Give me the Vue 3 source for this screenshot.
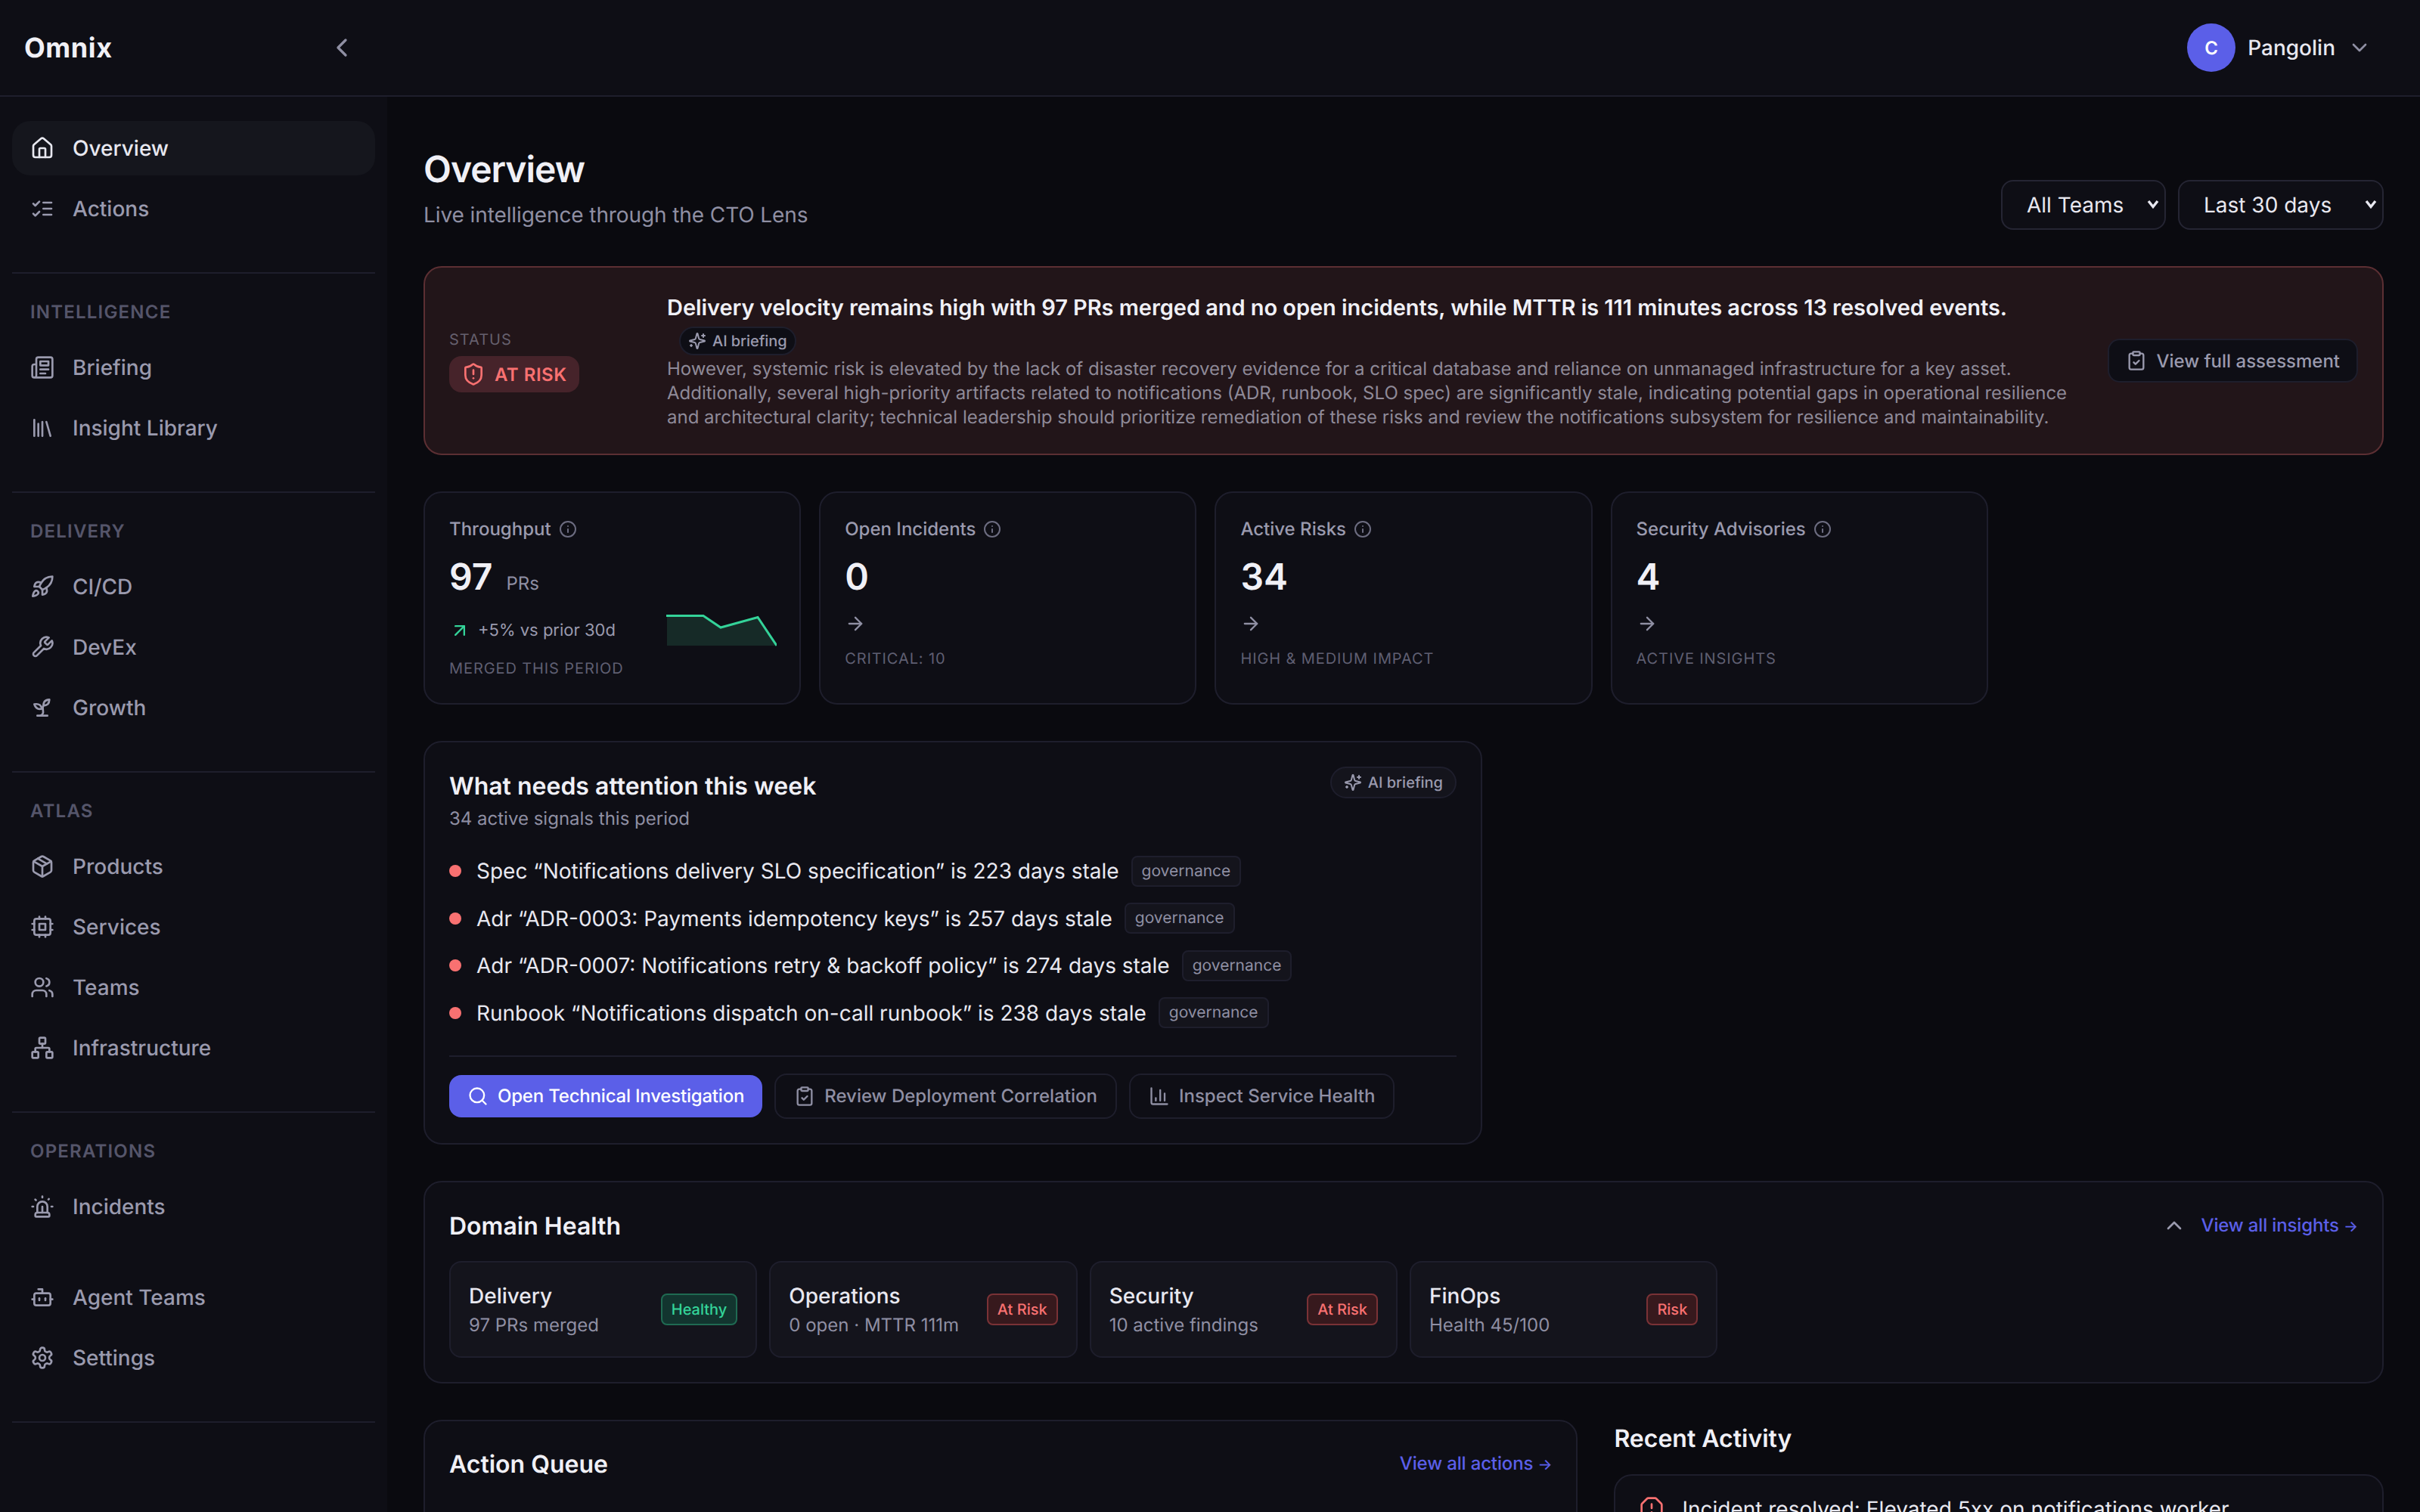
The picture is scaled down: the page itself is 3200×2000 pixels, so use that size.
<script setup>
import { h } from 'vue'

const paths = {
  home: '<path d="M15 21v-8a1 1 0 0 0-1-1h-4a1 1 0 0 0-1 1v8"/><path d="M3 10a2 2 0 0 1 .709-1.528l7-5.999a2 2 0 0 1 2.582 0l7 5.999A2 2 0 0 1 21 10v9a2 2 0 0 1-2 2H5a2 2 0 0 1-2-2z"/>',
  checks: '<path d="m3 17 2 2 4-4"/><path d="m3 7 2 2 4-4"/><path d="M13 6h8"/><path d="M13 12h8"/><path d="M13 18h8"/>',
  news: '<path d="M4 22h16a2 2 0 0 0 2-2V4a2 2 0 0 0-2-2H8a2 2 0 0 0-2 2v16a2 2 0 0 1-2 2Zm0 0a2 2 0 0 1-2-2v-9c0-1.1.9-2 2-2h2"/><path d="M18 14h-8"/><path d="M15 18h-5"/><path d="M10 6h8v4h-8V6Z"/>',
  library: '<path d="m16 6 4 14"/><path d="M12 6v14"/><path d="M8 8v12"/><path d="M4 4v16"/>',
  rocket: '<path d="M4.5 16.5c-1.5 1.26-2 5-2 5s3.74-.5 5-2c.71-.84.7-2.13-.09-2.91a2.18 2.18 0 0 0-2.91-.09z"/><path d="m12 15-3-3a22 22 0 0 1 2-3.95A12.88 12.88 0 0 1 22 2c0 2.72-.78 7.5-6 11a22.35 22.35 0 0 1-4 2z"/><path d="M9 12H4s.55-3.03 2-4c1.62-1.08 5 0 5 0"/><path d="M12 15v5s3.03-.55 4-2c1.08-1.62 0-5 0-5"/>',
  wrench: '<path d="M14.7 6.3a1 1 0 0 0 0 1.4l1.6 1.6a1 1 0 0 0 1.4 0l3.77-3.77a6 6 0 0 1-7.94 7.94l-6.91 6.91a2.12 2.12 0 0 1-3-3l6.91-6.91a6 6 0 0 1 7.94-7.94l-3.76 3.76z"/>',
  sprout: '<path d="M7 20h10"/><path d="M10 20c5.5-2.5.8-6.4 3-10"/><path d="M9.5 9.4c1.1.8 1.8 2.2 2.3 3.7-2 .4-3.5.4-4.8-.3-1.2-.6-2.3-1.9-3-4.2 2.8-.5 4.4 0 5.5.8z"/><path d="M14.1 6a7 7 0 0 0-1.1 4c1.9-.1 3.3-.6 4.3-1.4 1-1 1.6-2.3 1.7-4.6-2.7.1-4 1-4.9 2z"/>',
  package: '<path d="m7.5 4.27 9 5.15"/><path d="M21 8a2 2 0 0 0-1-1.73l-7-4a2 2 0 0 0-2 0l-7 4A2 2 0 0 0 3 8v8a2 2 0 0 0 1 1.73l7 4a2 2 0 0 0 2 0l7-4A2 2 0 0 0 21 16Z"/><path d="m3.3 7 8.7 5 8.7-5"/><path d="M12 22V12"/>',
  cpu: '<rect x="4" y="4" width="16" height="16" rx="2"/><rect x="9" y="9" width="6" height="6"/><path d="M15 2v2"/><path d="M15 20v2"/><path d="M2 15h2"/><path d="M2 9h2"/><path d="M20 15h2"/><path d="M20 9h2"/><path d="M9 2v2"/><path d="M9 20v2"/>',
  users: '<path d="M16 21v-2a4 4 0 0 0-4-4H6a4 4 0 0 0-4 4v2"/><circle cx="9" cy="7" r="4"/><path d="M22 21v-2a4 4 0 0 0-3-3.87"/><path d="M16 3.13a4 4 0 0 1 0 7.75"/>',
  network: '<rect x="16" y="16" width="6" height="6" rx="1"/><rect x="2" y="16" width="6" height="6" rx="1"/><rect x="9" y="2" width="6" height="6" rx="1"/><path d="M5 16v-3a1 1 0 0 1 1-1h12a1 1 0 0 1 1 1v3"/><path d="M12 12V8"/>',
  siren: '<path d="M7 18v-6a5 5 0 1 1 10 0v6"/><path d="M5 21a1 1 0 0 0 1 1h12a1 1 0 0 0 1-1v-1a2 2 0 0 0-2-2H7a2 2 0 0 0-2 2z"/><path d="M21 12h1"/><path d="M18.5 4.5 18 5"/><path d="M2 12h1"/><path d="M12 2v1"/><path d="m4.929 4.929.707.707"/><path d="M12 12v6"/>',
  bot: '<path d="M12 8V4H8"/><rect width="16" height="12" x="4" y="8" rx="2"/><path d="M2 14h2"/><path d="M20 14h2"/><path d="M15 13v2"/><path d="M9 13v2"/>',
  settings: '<path d="M12.22 2h-.44a2 2 0 0 0-2 2v.18a2 2 0 0 1-1 1.73l-.43.25a2 2 0 0 1-2 0l-.15-.08a2 2 0 0 0-2.73.73l-.22.38a2 2 0 0 0 .73 2.73l.15.1a2 2 0 0 1 1 1.72v.51a2 2 0 0 1-1 1.74l-.15.09a2 2 0 0 0-.73 2.73l.22.38a2 2 0 0 0 2.73.73l.15-.08a2 2 0 0 1 2 0l.43.25a2 2 0 0 1 1 1.73V20a2 2 0 0 0 2 2h.44a2 2 0 0 0 2-2v-.18a2 2 0 0 1 1-1.73l.43-.25a2 2 0 0 1 2 0l.15.08a2 2 0 0 0 2.73-.73l.22-.39a2 2 0 0 0-.73-2.73l-.15-.08a2 2 0 0 1-1-1.74v-.5a2 2 0 0 1 1-1.74l.15-.09a2 2 0 0 0 .73-2.73l-.22-.38a2 2 0 0 0-2.73-.73l-.15.08a2 2 0 0 1-2 0l-.43-.25a2 2 0 0 1-1-1.73V4a2 2 0 0 0-2-2z"/><circle cx="12" cy="12" r="3"/>',
  left: '<path d="m15 18-6-6 6-6"/>',
  down: '<path d="m6 9 6 6 6-6"/>',
  up: '<path d="m18 15-6-6-6 6"/>',
  info: '<circle cx="12" cy="12" r="10"/><path d="M12 16v-4"/><path d="M12 8h.01"/>',
  right: '<path d="M5 12h14"/><path d="m12 5 7 7-7 7"/>',
  upright: '<path d="M7 7h10v10"/><path d="M7 17 17 7"/>',
  sparkles: '<path d="M9.937 15.5A2 2 0 0 0 8.5 14.063l-6.135-1.582a.5.5 0 0 1 0-.962L8.5 9.936A2 2 0 0 0 9.937 8.5l1.582-6.135a.5.5 0 0 1 .963 0L14.063 8.5A2 2 0 0 0 15.5 9.937l6.135 1.581a.5.5 0 0 1 0 .964L15.5 14.063a2 2 0 0 0-1.437 1.437l-1.582 6.135a.5.5 0 0 1-.963 0z"/><path d="M20 3v4"/><path d="M22 5h-4"/><path d="M4 17v2"/><path d="M5 18H3"/>',
  shield: '<path d="M20 13c0 5-3.5 7.5-7.66 8.95a1 1 0 0 1-.67-.01C7.5 20.5 4 18 4 13V6a1 1 0 0 1 1-1c2 0 4.5-1.2 6.24-2.72a1.17 1.17 0 0 1 1.52 0C14.51 3.81 17 5 19 5a1 1 0 0 1 1 1z"/><path d="M12 8v4"/><path d="M12 16h.01"/>',
  clipboard: '<rect width="8" height="4" x="8" y="2" rx="1" ry="1"/><path d="M16 4h2a2 2 0 0 1 2 2v14a2 2 0 0 1-2 2H6a2 2 0 0 1-2-2V6a2 2 0 0 1 2-2h2"/><path d="m9 14 2 2 4-4"/>',
  search: '<circle cx="11" cy="11" r="8"/><path d="m21 21-4.3-4.3"/>',
  chart: '<path d="M3 3v16a2 2 0 0 0 2 2h16"/><path d="M18 17V9"/><path d="M13 17V5"/><path d="M8 17v-3"/>',
  octagon: '<path d="M12 16h.01"/><path d="M12 8v4"/><path d="M15.312 2a2 2 0 0 1 1.414.586l4.688 4.688A2 2 0 0 1 22 8.688v6.624a2 2 0 0 1-.586 1.414l-4.688 4.688a2 2 0 0 1-1.414.586H8.688a2 2 0 0 1-1.414-.586l-4.688-4.688A2 2 0 0 1 2 15.312V8.688a2 2 0 0 1 .586-1.414l4.688-4.688A2 2 0 0 1 8.688 2z"/>'
}

const Icon = (props) =>
  h('svg', {
    viewBox: '0 0 24 24',
    width: props.size,
    height: props.size,
    fill: 'none',
    stroke: 'currentColor',
    'stroke-width': 2,
    'stroke-linecap': 'round',
    'stroke-linejoin': 'round',
    style: { flex: 'none', display: 'block' },
    innerHTML: paths[props.name]
  })
Icon.props = ['name', 'size']

const navGroups = [
  { items: [{ icon: 'home', label: 'Overview', active: true }, { icon: 'checks', label: 'Actions' }], line: true },
  { title: 'INTELLIGENCE', items: [{ icon: 'news', label: 'Briefing' }, { icon: 'library', label: 'Insight Library' }], line: true },
  { title: 'DELIVERY', items: [{ icon: 'rocket', label: 'CI/CD' }, { icon: 'wrench', label: 'DevEx' }, { icon: 'sprout', label: 'Growth' }], line: true },
  { title: 'ATLAS', items: [{ icon: 'package', label: 'Products' }, { icon: 'cpu', label: 'Services' }, { icon: 'users', label: 'Teams' }, { icon: 'network', label: 'Infrastructure' }], line: true },
  { title: 'OPERATIONS', items: [{ icon: 'siren', label: 'Incidents' }], line: false },
  { items: [{ icon: 'bot', label: 'Agent Teams' }, { icon: 'settings', label: 'Settings' }], line: true }
]

const kpis = [
  { title: 'Open Incidents', value: '0', foot: 'CRITICAL: 10' },
  { title: 'Active Risks', value: '34', foot: 'HIGH & MEDIUM IMPACT' },
  { title: 'Security Advisories', value: '4', foot: 'ACTIVE INSIGHTS' }
]

const signals = [
  'Spec “Notifications delivery SLO specification” is 223 days stale',
  'Adr “ADR-0003: Payments idempotency keys” is 257 days stale',
  'Adr “ADR-0007: Notifications retry & backoff policy” is 274 days stale',
  'Runbook “Notifications dispatch on-call runbook” is 238 days stale'
]

const domains = [
  { name: 'Delivery', sub: '97 PRs merged', badge: 'Healthy', tone: 'good' },
  { name: 'Operations', sub: '0 open · MTTR 111m', badge: 'At Risk', tone: 'bad' },
  { name: 'Security', sub: '10 active findings', badge: 'At Risk', tone: 'bad' },
  { name: 'FinOps', sub: 'Health 45/100', badge: 'Risk', tone: 'bad' }
]
</script>

<template>
  <div class="app">
    <aside class="sidebar">
      <div class="brand">
        <span class="logo">Omnix</span>
        <Icon name="left" :size="40" class="collapse" />
      </div>
      <nav class="nav">
        <section v-for="(g, i) in navGroups" :key="i" class="group" :class="{ line: g.line }">
          <div v-if="g.title" class="group-title">{{ g.title }}</div>
          <div class="items">
            <a v-for="it in g.items" :key="it.label" class="item" :class="{ active: it.active }">
              <Icon :name="it.icon" :size="32" />
              <span>{{ it.label }}</span>
            </a>
          </div>
        </section>
      </nav>
    </aside>

    <div class="body">
      <header class="topbar">
        <div class="user">
          <span class="avatar">C</span>
          <span class="user-name">Pangolin</span>
          <Icon name="down" :size="32" class="user-chev" />
        </div>
      </header>

      <main class="main">
        <div class="page-head">
          <div>
            <h1>Overview</h1>
            <p class="lead">Live intelligence through the CTO Lens</p>
          </div>
          <div class="filters">
            <label class="select-wrap teams">
              <select><option>All Teams</option></select>
              <svg class="select-arrow" viewBox="0 0 16 12" width="16" height="12"><path d="M2 2 8 9.5 14 2" fill="none" stroke="currentColor" stroke-width="3.4" /></svg>
            </label>
            <label class="select-wrap period">
              <select><option>Last 30 days</option></select>
              <svg class="select-arrow" viewBox="0 0 16 12" width="16" height="12"><path d="M2 2 8 9.5 14 2" fill="none" stroke="currentColor" stroke-width="3.4" /></svg>
            </label>
          </div>
        </div>

        <section class="status">
          <div class="status-side">
            <div class="status-label">STATUS</div>
            <div class="risk-pill"><Icon name="shield" :size="32" /><span>AT RISK</span></div>
          </div>
          <div class="status-text">
            <h2>Delivery velocity remains high with 97 PRs merged and no open incidents, while MTTR is 111 minutes across 13 resolved events. <span class="ai dark"><Icon name="sparkles" :size="24" />AI briefing</span></h2>
            <p>However, systemic risk is elevated by the lack of disaster recovery evidence for a critical database and reliance on unmanaged infrastructure for a key asset. Additionally, several high-priority artifacts related to notifications (ADR, runbook, SLO spec) are significantly stale, indicating potential gaps in operational resilience and architectural clarity; technical leadership should prioritize remediation of these risks and review the notifications subsystem for resilience and maintainability.</p>
          </div>
          <button class="assess"><Icon name="clipboard" :size="28" />View full assessment</button>
        </section>

        <section class="kpis">
          <article class="card kpi">
            <div class="kpi-title">Throughput <Icon name="info" :size="24" /></div>
            <div class="kpi-value">97 <small>PRs</small></div>
            <div class="trend">
              <span class="trend-text"><Icon name="upright" :size="28" class="green" />+5% vs prior 30d</span>
              <svg class="spark" viewBox="0 0 146 42" width="146" height="42">
                <path d="M1 1.5H49L72 17 121 3.5 146 41H1Z" fill="#162a27" />
                <path d="M0 1.5H49L72 17 121 3.5 146 41" fill="none" stroke="#34d399" stroke-width="3" />
              </svg>
            </div>
            <div class="kpi-foot tight">MERGED THIS PERIOD</div>
          </article>
          <article v-for="k in kpis" :key="k.title" class="card kpi">
            <div class="kpi-title">{{ k.title }} <Icon name="info" :size="24" /></div>
            <div class="kpi-value">{{ k.value }}</div>
            <Icon name="right" :size="28" class="kpi-arrow" />
            <div class="kpi-foot">{{ k.foot }}</div>
          </article>
        </section>

        <section class="card attention">
          <div class="attention-head">
            <div>
              <h3>What needs attention this week</h3>
              <p class="muted">34 active signals this period</p>
            </div>
            <span class="ai soft"><Icon name="sparkles" :size="24" />AI briefing</span>
          </div>
          <ul class="signals">
            <li v-for="s in signals" :key="s">
              <i class="dot"></i><span>{{ s }}</span><em class="tag">governance</em>
            </li>
          </ul>
          <div class="actions">
            <button class="btn primary"><Icon name="search" :size="28" />Open Technical Investigation</button>
            <button class="btn"><Icon name="clipboard" :size="28" />Review Deployment Correlation</button>
            <button class="btn"><Icon name="chart" :size="28" />Inspect Service Health</button>
          </div>
        </section>

        <section class="card domain">
          <div class="domain-head">
            <h3>Domain Health</h3>
            <div class="domain-links">
              <Icon name="up" :size="32" class="up" />
              <a class="link">View all insights <span class="arrow">→</span></a>
            </div>
          </div>
          <div class="domain-grid">
            <div v-for="d in domains" :key="d.name" class="domain-item">
              <div class="domain-text">
                <div class="domain-name">{{ d.name }}</div>
                <div class="domain-sub">{{ d.sub }}</div>
              </div>
              <span class="badge" :class="d.tone">{{ d.badge }}</span>
            </div>
          </div>
        </section>

        <section class="bottom">
          <div class="card queue">
            <h3>Action Queue</h3>
            <a class="link">View all actions <span class="arrow">→</span></a>
          </div>
          <div>
            <h3 class="recent-title">Recent Activity</h3>
            <div class="card recent">
              <Icon name="octagon" :size="32" class="red" />
              <span>Incident resolved: Elevated 5xx on notifications worker</span>
            </div>
          </div>
        </section>
      </main>
    </div>
  </div>
</template>

<style>
html, body { margin: 0; background: #0a0a0f; overflow: hidden; }
</style>

<style scoped>
* { box-sizing: border-box; }
.app {
  display: flex;
  width: 3200px;
  height: 2000px;
  overflow: hidden;
  background: #0a0a0f;
  color: #e8e8f0;
  font-family: Inter, "Noto Sans", sans-serif;
  text-rendering: geometricPrecision;
}
h1, h2, h3, p, ul { margin: 0; padding: 0; }
button { font-family: inherit; cursor: pointer; text-rendering: geometricPrecision; white-space: nowrap; }

.sidebar { width: 512px; flex: none; background: #0e0e15; }
.brand {
  height: 128px;
  border-bottom: 2px solid #1e1e2c;
  display: flex;
  align-items: center;
  justify-content: space-between;
  padding: 0 40px 0 32px;
}
.logo { font-size: 36px; font-weight: 700; letter-spacing: 0.6px; color: #f0f0f6; }
.collapse { color: #8f8fa3; }
.nav { padding: 32px 16px 0; }
.group { padding-bottom: 48px; }
.group.line { border-bottom: 2px solid #1e1e2c; }
.group-title {
  font-size: 24px;
  line-height: 36px;
  font-weight: 600;
  letter-spacing: 1.2px;
  color: #55556a;
  padding: 33px 24px 19px;
}
.items { display: flex; flex-direction: column; gap: 8px; }
.item {
  display: flex;
  align-items: center;
  gap: 24px;
  height: 72px;
  padding: 0 24px;
  border-radius: 24px;
  font-size: 28px;
  font-weight: 500;
  color: #9a9aae;
}
.item.active { background: #15161d; color: #e8e8f0; }

.body { flex: 1; min-width: 0; display: flex; flex-direction: column; }
.topbar {
  height: 128px;
  flex: none;
  background: #0e0e15;
  border-bottom: 2px solid #1e1e2c;
  display: flex;
  justify-content: flex-end;
  align-items: center;
  padding-right: 64px;
}
.user { display: flex; align-items: center; }
.avatar {
  width: 64px;
  height: 64px;
  border-radius: 50%;
  background: #5b5fe8;
  color: #fff;
  display: flex;
  align-items: center;
  justify-content: center;
  font-size: 24px;
  font-weight: 600;
}
.user-name { margin-left: 16px; font-size: 28px; font-weight: 500; color: #e8e8f0; }
.user-chev { margin-left: 16px; color: #8f8fa3; }

.main { padding: 64px 48px 0; display: flex; flex-direction: column; gap: 48px; }
.page-head { display: flex; justify-content: space-between; align-items: flex-end; }
h1 { margin-top: 2px; font-size: 48px; line-height: 60px; font-weight: 600; letter-spacing: -1px; color: #f0f0f6; }
.lead { margin-top: 10px; font-size: 28px; line-height: 40px; letter-spacing: -0.1px; color: #8f8fa3; }
.filters { display: flex; gap: 16px; }
.select-wrap { position: relative; display: block; height: 66px; }
.select-wrap.teams { width: 218px; }
.select-wrap.period { width: 272px; }
.select-wrap select {
  appearance: none;
  width: 100%;
  height: 100%;
  padding: 0 32px;
  background: #0e0e15;
  border: 2px solid #252533;
  border-radius: 16px;
  color: #e8e8f0;
  font: 400 28px Inter, sans-serif;
  text-rendering: geometricPrecision;
  outline: none;
}
.select-arrow { position: absolute; right: 9px; top: 26px; color: #e8e8f0; pointer-events: none; }

.status {
  display: flex;
  align-items: center;
  gap: 48px;
  padding: 32px;
  background: #221519;
  border: 2px solid #5c2f33;
  border-radius: 24px;
}
.status-side { width: 240px; flex: none; }
.status-label { font-size: 20px; line-height: 28px; letter-spacing: 1px; color: #66606e; }
.risk-pill {
  display: inline-flex;
  align-items: center;
  gap: 12px;
  height: 48px;
  margin-top: 8px;
  padding: 0 16px;
  border-radius: 16px;
  background: #46232a;
  color: #f87171;
  font-size: 24px;
  font-weight: 600;
  letter-spacing: 0.5px;
}
.status-text { flex: 1; min-width: 0; }
.status-text h2 { font-size: 29px; line-height: 42px; font-weight: 600; letter-spacing: -0.05px; color: #f0f0f6; }
.status-text p { margin-top: 2px; font-size: 24px; line-height: 32px; color: #8f8a98; }
.ai {
  display: inline-flex;
  align-items: center;
  gap: 8px;
  border-radius: 999px;
  font-size: 20px;
  font-weight: 500;
  color: #9a9aae;
  vertical-align: middle;
  line-height: 1;
}
.ai.dark { height: 38px; margin-left: 16px; padding: 0 10px; background: #0e0e15; border: 2px solid #1e1e2c; }
.ai.soft { height: 42px; padding: 0 16px; background: #14141c; border: 2px solid #1e1e2c; flex: none; }
.assess {
  display: flex;
  align-items: center;
  gap: 12px;
  height: 58px;
  padding: 0 22px;
  flex: none;
  background: #0e0e15;
  border: 2px solid #1e1e2c;
  border-radius: 16px;
  color: #9a9aae;
  font-size: 24px;
  font-weight: 500;
}

.card { background: #0e0e15; border: 2px solid #1e1e2c; border-radius: 24px; }
.kpis { display: grid; grid-template-columns: repeat(5, 1fr); gap: 24px; }
.kpi { height: 282px; padding: 30px 32px; }
.kpi-title { display: flex; align-items: center; gap: 10px; font-size: 24px; line-height: 36px; font-weight: 500; color: #9a9aae; }
.kpi-title svg { color: #6c6c80; }
.kpi-value { margin-top: 13px; font-size: 48px; line-height: 64px; font-weight: 600; color: #f0f0f6; }
.kpi-value small { margin-left: 6px; font-size: 24px; font-weight: 400; color: #8f8fa3; }
.trend { display: flex; justify-content: space-between; align-items: center; height: 42px; margin-top: 9px; }
.trend-text { display: flex; align-items: center; gap: 10px; font-size: 22px; color: #9a9aae; }
.green { color: #34d399; }
.spark { display: block; margin-right: -2px; }
.kpi-arrow { margin-top: 16px; color: #8f8fa3; }
.kpi-foot { margin-top: 17px; font-size: 20px; line-height: 30px; letter-spacing: 0.9px; color: #5f5f72; }
.kpi-foot.tight { margin-top: 14px; }

.attention { width: 1400px; height: 534px; padding: 32px; }
.attention-head { display: flex; justify-content: space-between; align-items: flex-start; }
h3 { font-size: 32px; line-height: 44px; font-weight: 600; color: #f0f0f6; }
.attention-head h3 { margin-top: 4px; }
.muted { margin-top: 5px; font-size: 24px; line-height: 32px; color: #8f8fa3; }
.signals { list-style: none; margin-top: 32px; display: flex; flex-direction: column; gap: 20.6px; }
.signals li { display: flex; align-items: center; height: 42px; font-size: 28px; color: #e8e8f0; }
.dot { width: 16px; height: 16px; border-radius: 50%; background: #f87171; margin-right: 20px; flex: none; }
.tag {
  margin-left: 16px;
  height: 41px;
  padding: 0 12px;
  display: flex;
  align-items: center;
  background: #14141c;
  border: 2px solid #1e1e2c;
  border-radius: 8px;
  font-style: normal;
  font-size: 21px;
  color: #8f8fa3;
}
.actions { margin-top: 35px; padding-top: 22px; border-top: 2px solid #1e1e2c; display: flex; align-items: center; gap: 16px; }
.btn {
  display: flex;
  flex: none;
  align-items: center;
  gap: 12px;
  height: 60px;
  padding: 0 24px;
  background: transparent;
  border: 2px solid #1e1e2c;
  border-radius: 16px;
  color: #8f8fa3;
  font-size: 24px;
  font-weight: 500;
}
.btn.primary { height: 56px; background: #5b5fe8; border: 0; color: #fff; letter-spacing: -0.2px; }

.domain { padding: 32px; height: 268px; }
.domain-head { display: flex; justify-content: space-between; align-items: center; height: 52px; }
.domain-links { display: flex; align-items: center; gap: 20px; margin-top: -3px; }
.up { color: #9a9aae; }
.link { font-size: 24px; font-weight: 500; letter-spacing: -0.15px; color: #5b5fe8; }
.arrow { font-size: 20px; }
.domain-grid { margin-top: 20px; display: grid; grid-template-columns: repeat(6, 1fr); gap: 16px; }
.domain-item {
  height: 128px;
  display: flex;
  align-items: center;
  justify-content: space-between;
  padding: 0 24px;
  background: #14141c;
  border: 2px solid #1e1e2c;
  border-radius: 16px;
}
.domain-text { padding-top: 4px; }
.domain-name { font-size: 28px; line-height: 38px; font-weight: 500; color: #e8e8f0; }
.domain-sub { font-size: 24px; line-height: 40px; color: #8f8fa3; white-space: nowrap; }
.badge {
  height: 42px;
  padding: 0 12px;
  display: flex;
  align-items: center;
  border-radius: 8px;
  border: 2px solid;
  font-size: 20px;
  font-weight: 500;
}
.badge.good { color: #34d399; background: #12352f; border-color: #1f6a52; }
.badge.bad { color: #f87171; background: #37191d; border-color: #7a3236; }

.bottom { display: grid; grid-template-columns: 3fr 2fr; gap: 48px; }
.queue { height: 400px; padding: 35px 32px; display: flex; justify-content: space-between; align-items: flex-start; }
.queue .link { margin-top: 6px; }
.recent-title { margin-top: 3px; }
.recent { margin-top: 25px; padding: 27px 32px; display: flex; align-items: flex-start; gap: 24px; font-size: 28px; height: 400px; color: #e8e8f0; }
.red { color: #f87171; }
</style>
